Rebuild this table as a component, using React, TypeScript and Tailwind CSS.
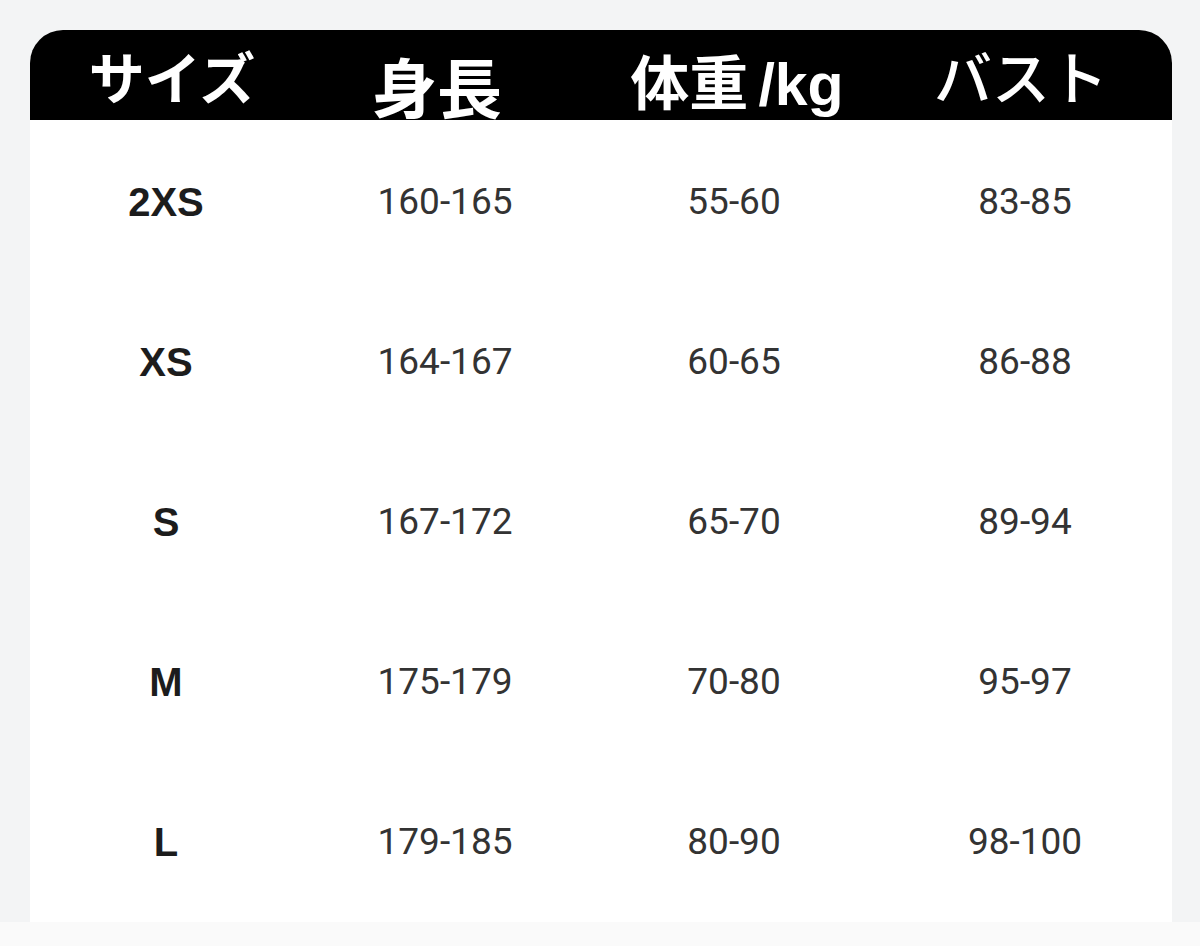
const rows = [
  { size: "2XS", height: "160-165", weight: "55-60", bust: "83-85" },
  { size: "XS", height: "164-167", weight: "60-65", bust: "86-88" },
  { size: "S", height: "167-172", weight: "65-70", bust: "89-94" },
  { size: "M", height: "175-179", weight: "70-80", bust: "95-97" },
  { size: "L", height: "179-185", weight: "80-90", bust: "98-100" },
];

const cols = "grid grid-cols-[272px_286px_298px_286px]";

export default function App() {
  return (
    <div className="flex h-[946px] w-[1200px] flex-col bg-[#f3f4f5]">
      <div className="pl-[30px] pt-[30px]">
        <div className="w-[1142px] overflow-hidden rounded-t-[33px] bg-white">
          <div
            className={`${cols} h-[90px] items-center bg-black text-white`}
            style={{ fontFamily: '"Noto Sans CJK JP", "Noto Sans", sans-serif' }}
          >
            <span className="pl-[12px] text-center text-[56px] font-bold leading-none">サイズ</span>
            <span className="mt-[20px] pr-[16px] text-center text-[65px] font-bold leading-none">身長</span>
            <span className="mt-[14px] whitespace-nowrap text-center text-[59px] font-bold leading-none">
              体重
              <span className="ml-[10px]" style={{ fontFamily: '"Liberation Sans", sans-serif' }}>
                /kg
              </span>
            </span>
            <span className="pr-[16px] text-center text-[58px] font-medium leading-none">バスト</span>
          </div>
          <div className="pt-[2px]">
            {rows.map((row) => (
              <div className={`${cols} h-[160px] items-center`} key={row.size}>
                <span
                  className="text-center text-[40px] font-bold text-[#1c1c1c]"
                  style={{ fontFamily: '"Liberation Sans", Arial, sans-serif' }}
                >
                  {row.size}
                </span>
                <span className="text-center text-[37px] text-[#333]" style={{ fontFamily: "Roboto, sans-serif" }}>
                  {row.height}
                </span>
                <span className="-ml-[6px] text-center text-[37px] text-[#333]" style={{ fontFamily: "Roboto, sans-serif" }}>
                  {row.weight}
                </span>
                <span className="-ml-[8px] text-center text-[37px] text-[#333]" style={{ fontFamily: "Roboto, sans-serif" }}>
                  {row.bust}
                </span>
              </div>
            ))}
          </div>
        </div>
      </div>
      <div className="flex-1 bg-[#fafafa]" />
    </div>
  );
}
